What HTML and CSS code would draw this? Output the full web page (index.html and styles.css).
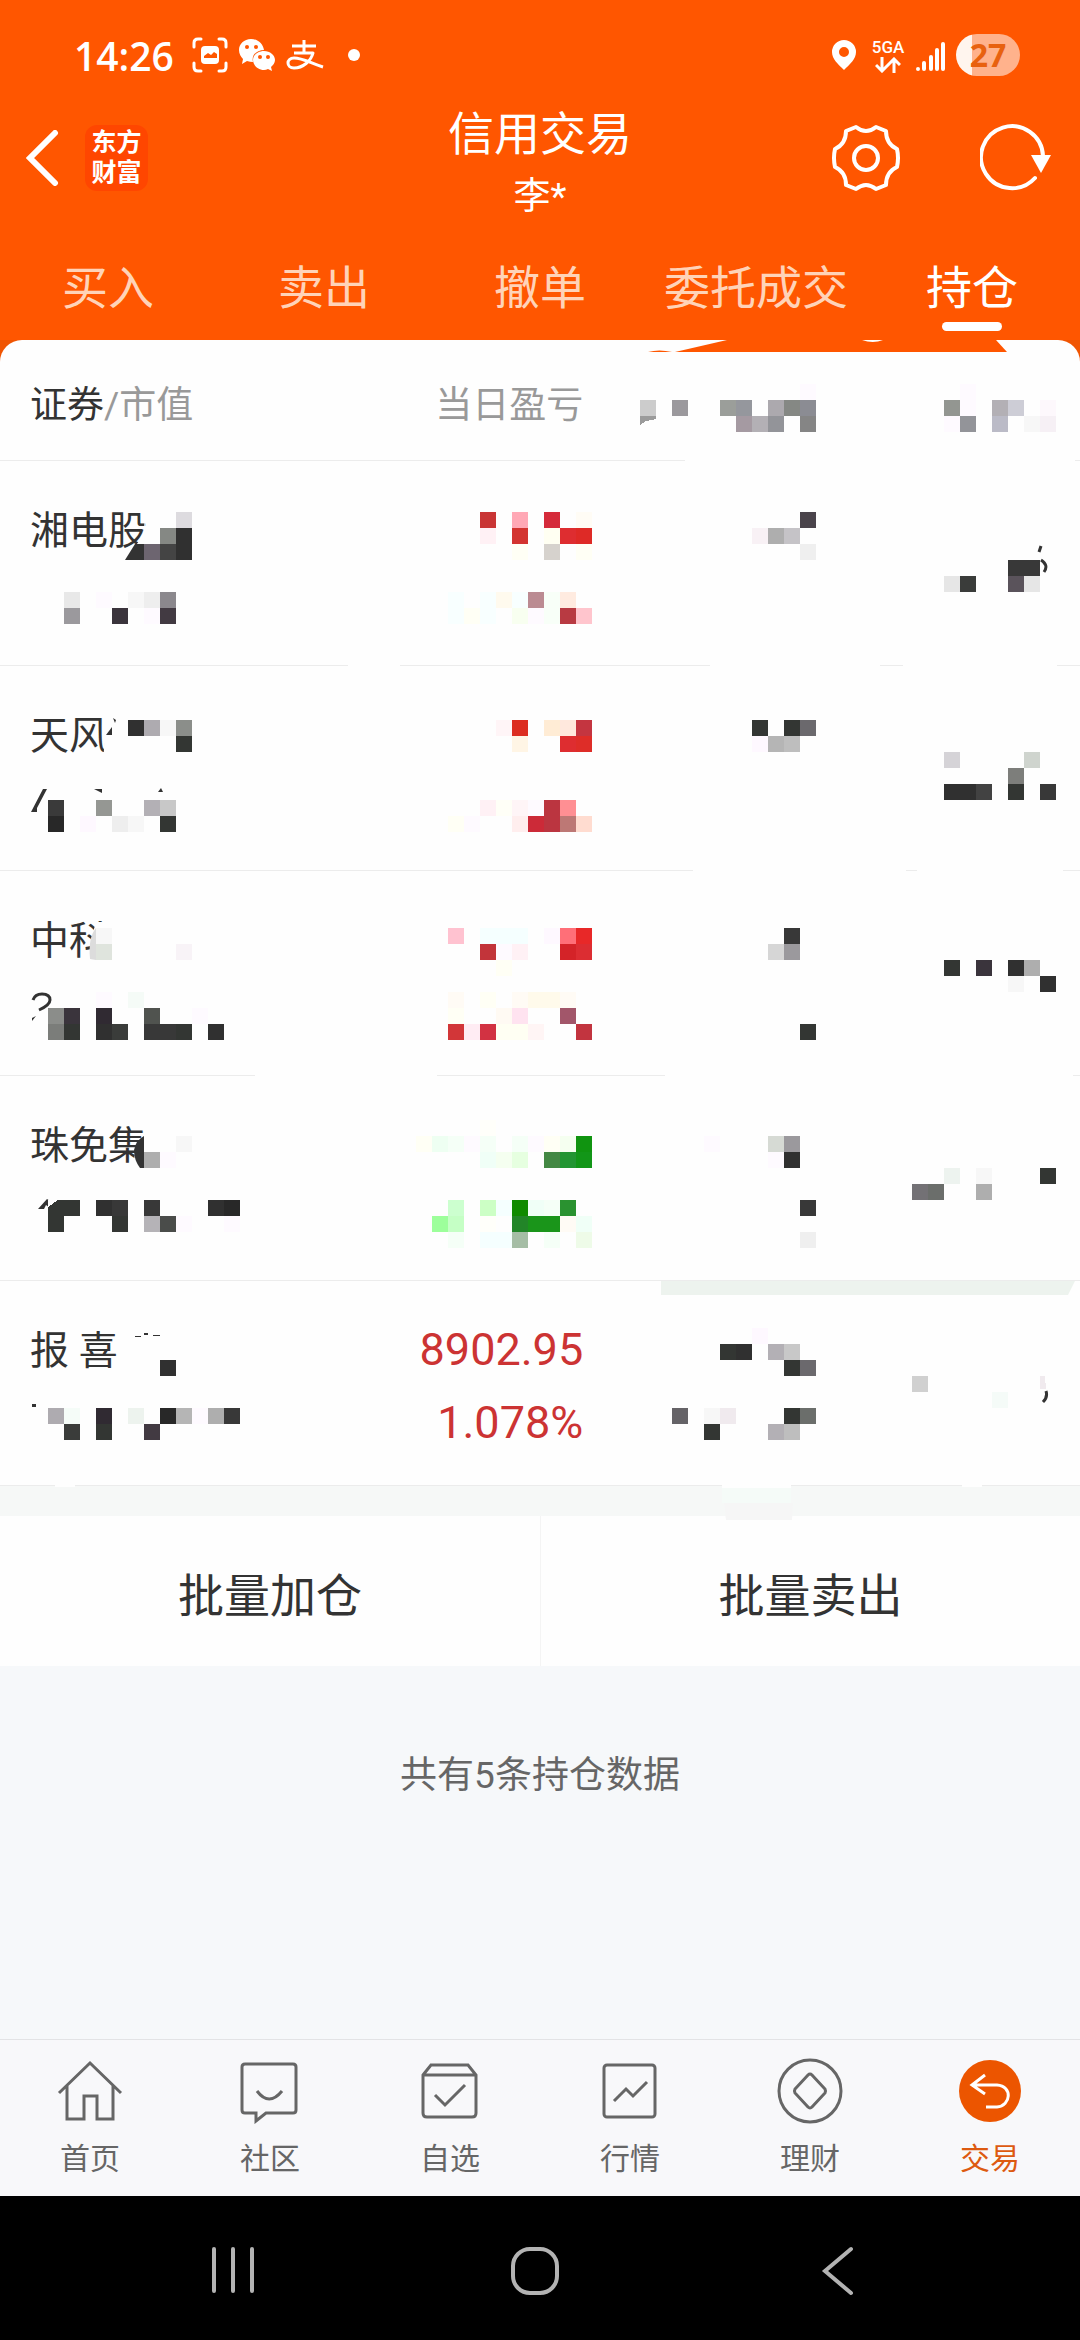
FILE: index.html
```html
<!DOCTYPE html>
<html lang="zh-CN">
<head>
    <meta charset="UTF-8">
    <meta name="viewport" content="width=device-width, initial-scale=1.0">
    <title>信用交易 - 持仓</title>
    <link rel="stylesheet" href="styles.css">
</head>
<body>
    <header class="header">
        <div class="status">
            <span class="time">14:26</span>
            <div class="status-icons">
                <svg width="36" height="36" viewBox="0 0 36 36">
                    <path d="M2 10V6q0-4 4-4h3M27 2h3q4 0 4 4v4M34 26v4q0 4-4 4h-3M9 34H6q-4 0-4-4v-4" fill="none" stroke="#fff" stroke-width="3" stroke-linecap="round"/>
                    <rect x="9" y="9" width="18" height="18" rx="4" fill="#fff"/>
                    <path d="M12 21v-2l4-3 3 2 3-3 3 2v4z" fill="#ff5600"/>
                </svg>
                <svg width="38" height="32" viewBox="0 0 38 32">
                    <path d="M13 0C6 0 1 5 1 11c0 4 2 7 4 9l-1 5 5-3q3 1 6 1C13 15 20 11 26 11 25 5 20 0 13 0z" fill="#fff"/>
                    <path d="M26 12c-6 0-11 4-11 9s5 10 11 10q2 0 4-1l4 2-1-4c2-2 4-4 4-7 0-5-5-9-11-9z" fill="#fff"/>
                    <circle cx="9" cy="8" r="2" fill="#ff5600"/>
                    <circle cx="18" cy="8" r="2" fill="#ff5600"/>
                    <circle cx="22" cy="18" r="2" fill="#ff5600"/>
                    <circle cx="30" cy="18" r="2" fill="#ff5600"/>
                </svg>
                <svg width="38" height="32" viewBox="0 0 38 32" fill="none" stroke="#fff" stroke-width="3">
                    <path d="M6 7h24M18 1v13M8 14h19C25 22 17 29 8 29 0 29 0 19 8 19c9 0 16 5 29 9" stroke-linejoin="round"/>
                </svg>
                <span class="dot"></span>
            </div>
            <div class="status-right">
                <svg class="pin" width="24" height="30" viewBox="0 0 24 30">
                    <path d="M12 0a12 12 0 0 0-12 12c0 7 6 12 12 18 6-6 12-11 12-18a12 12 0 0 0-12-12zm0 17a5 5 0 1 1 0-10 5 5 0 0 1 0 10z" fill="#fff" fill-rule="evenodd"/>
                </svg>
                <div class="net">
                    <span>5GA</span>
                    <svg width="26" height="16" viewBox="0 0 26 16" fill="none" stroke="#fff" stroke-width="3">
                        <path d="M7 0v14M1 8l6 6 6-6M19 16V2M13 8l6-6 6 6"/>
                    </svg>
                </div>
                <svg class="signal" width="30" height="30" viewBox="0 0 30 30" stroke="#fff" stroke-width="4" stroke-linecap="round">
                    <path d="M2 27v0M8 21v6M15 15v12M21 8v19M27 2v25"/>
                </svg>
                <span class="battery">27</span>
            </div>
        </div>

        <div class="nav">
            <div class="nav-left">
                <button class="icon-btn" aria-label="返回">
                    <svg width="33" height="56" viewBox="0 0 33 56">
                        <path d="M29 3L4 28l25 25" fill="none" stroke="#fff" stroke-width="6" stroke-linecap="round"/>
                    </svg>
                </button>
                <a href="#" class="logo">东方<br>财富</a>
            </div>
            <div class="nav-title">
                <h1>信用交易</h1>
                <p>李*</p>
            </div>
            <div class="nav-right">
                <button class="icon-btn" aria-label="设置">
                    <svg width="68" height="68" viewBox="-34 -34 68 68" fill="none" stroke="#fff" stroke-width="4" stroke-linejoin="round">
                        <path d="M-10-31Q0-23 10-31L20-27Q20-14 31-9Q33 0 31 9Q20 14 20 27L10 31Q0 23-10 31L-20 27Q-20 14-31 9Q-33 0-31-9Q-20-14-20-27Z"/>
                        <circle r="12"/>
                    </svg>
                </button>
                <button class="icon-btn" aria-label="刷新">
                    <svg width="72" height="68" viewBox="0 0 72 68">
                        <path d="M55 54A31 31 0 1 1 63 32" fill="none" stroke="#fff" stroke-width="4" stroke-linecap="round"/>
                        <path d="M51 31h20l-10 18z" fill="#fff"/>
                    </svg>
                </button>
            </div>
        </div>

        <nav class="tabs">
            <a href="#">买入</a>
            <a href="#">卖出</a>
            <a href="#">撤单</a>
            <a href="#">委托成交</a>
            <a href="#" class="active">持仓</a>
        </nav>
    </header>

    <main>
        <div class="holdings">
            <table>
                <thead>
                    <tr>
                        <th class="name">证券<span>/市值</span></th>
                        <th class="profit">当日盈亏</th>
                        <th></th>
                        <th></th>
                    </tr>
                </thead>
                <tbody>
                    <tr><td class="name">湘电股</td><td class="profit"></td><td></td><td></td></tr>
                    <tr><td class="name">天风</td><td class="profit"></td><td></td><td></td></tr>
                    <tr><td class="name">中科</td><td class="profit"></td><td></td><td></td></tr>
                    <tr><td class="name">珠免集</td><td class="profit"></td><td></td><td></td></tr>
                    <tr><td class="name">报 喜</td><td class="profit">8902.95<br>1.078%</td><td></td><td></td></tr>
                </tbody>
            </table>
            <!-- privacy mask: erased parts, scraps left over, then the mosaic on a 16px grid -->
            <svg class="mask" viewBox="0 340 1080 1180" aria-hidden="true">
                <g fill="#ff5600">
                    <path d="M675 352L727 340H996L1007 352z"/>
                    <path d="M648 352q11-3 24 0z"/>
                </g>
                <path d="M862 340h21q-10 4-21 0z" fill="#fefefe"/>
                <g fill="#fefefe">
                    <path d="M685 458h390v5H685zM348 663h52v5h-52zM710 663h170v5H710zM903 663h154v5H903z"/>
                    <path d="M693 868h213v5H693zM917 868h146v5H917zM255 1073h182v5H255zM665 1073h408v5H665z"/>
                    <path d="M145 505V560H124L144 535zM103 775l2-55h20v75h-20zM94 960q-6-22 3-38h30v50H94z"/>
                    <path d="M144 1120h10v50h-20q-2-20 10-34zM55 1484h20v3H55zM962 1484h20v3h-20z"/>
                </g>
                <path d="M661 1281h414l-7 14H661z" fill="#edf3ee"/>
                <path d="M722 1484h69v4h-69z" fill="#fefefe"/>
                <path d="M722 1488h69v15h-69z" fill="#f5fbf8"/>
                <path d="M724 1503h69l-1 17h-66z" fill="#f6f6f6"/>
                <g fill="#333">
                    <path d="M125 560l10-16h10v16z"/>
                    <path d="M106 735l6-8v8zM113 718l3 2-1 3z"/>
                    <path d="M31 812l12-23h4l-10 19v4zM94 789h8v4zM158 792l3-4 2 4z"/>
                    <path d="M32 1018l4-2-4 5z"/>
                    <path d="M134 1150q2-10 10-14v32h-4q-6-8-6-18z"/>
                    <path d="M38 1209l9-10 3 2v7l-4-3-2 4z"/>
                    <path d="M135 1336h6v1h-6zM144 1333h4v2h-4zM153 1335h7v1h-7zM32 1404h4v3h-4z"/>
                </g>
                <path d="M90 959q-2-22 6-31v32z" fill="#dcdcdc"/>
                <g fill="none" stroke="#333" stroke-width="3">
                    <path d="M33 1000q2-6 9-6 8 0 8 6 0 5-11 10"/>
                    <path d="M1041 546l-2 6M1041 560q8 5 3 12M1046 1391q2 6-3 11"/>
                </g>
                <g id="mosaic" shape-rendering="crispEdges"></g>
            </svg>
        </div>

        <div class="actions">
            <button>批量加仓</button>
            <button>批量卖出</button>
        </div>
        <p class="count">共有5条持仓数据</p>
    </main>

    <nav class="tabbar">
        <a href="#">
            <svg width="66" height="66" viewBox="0 0 66 66"><path d="M2 35L33 5l31 30M10 28v33h17V38h13v23h16V28"/></svg>
            首页
        </a>
        <a href="#">
            <svg width="66" height="66" viewBox="0 0 66 66"><path d="M8 6h48q3 0 3 3v43q0 3-3 3H29l-10 8v-8H8q-3 0-3-3V9q0-3 3-3zM20 33q12 16 25 0"/></svg>
            社区
        </a>
        <a href="#">
            <svg width="66" height="66" viewBox="0 0 66 66"><path d="M6 17l8-10h37l8 10v38q0 4-4 4H10q-4 0-4-4zM6 17h53M18 37l10 10 20-20"/></svg>
            自选
        </a>
        <a href="#">
            <svg width="66" height="66" viewBox="0 0 66 66"><rect x="7" y="7" width="51" height="52" rx="3"/><path d="M17 43l12-12 7 7 14-14"/></svg>
            行情
        </a>
        <a href="#">
            <svg width="66" height="66" viewBox="0 0 66 66"><circle cx="33" cy="33" r="31"/><path d="M31 17q2-2 4 0l13 14q1 2 0 4L35 49q-2 2-4 0L18 35q-1-2 0-4z"/></svg>
            理财
        </a>
        <a href="#" class="active">
            <svg width="66" height="66" viewBox="0 0 66 66"><circle cx="33" cy="33" r="31"/><path d="M28 17L15 27l13 9M16 27h24c16 1 14 21 0 22H29"/></svg>
            交易
        </a>
    </nav>

    <footer class="system-nav">
        <button class="icon-btn" aria-label="最近任务">
            <svg width="50" height="50" viewBox="0 0 50 50"><path d="M6 3v42M25 3v42M44 3v42"/></svg>
        </button>
        <button class="icon-btn" aria-label="主屏幕">
            <svg width="50" height="50" viewBox="0 0 50 50"><rect x="3" y="3" width="44" height="44" rx="17"/></svg>
        </button>
        <button class="icon-btn" aria-label="后退">
            <svg width="50" height="50" viewBox="0 0 50 50"><path d="M39 3L13 25l26 22"/></svg>
        </button>
    </footer>

    <script>
        // grid row -> "column:colour" for every block that is filled
        const blocks = {
            24: '50:fefaff 60:fefaff',
            25: '40:cccccc 42:9b999d 45:9b9e9a 46:95979d 48:aca9ae 49:858884 50:8b8c93 59:939691 60:fefaff 62:b3b0b5 63:cdcdd6 65:fdf8fc',
            26: '46:a59aa2 47:b3b0b5 48:939499 50:858585 59:fefaff 60:939499 62:bbbbc7 64:f7f7f7 65:f6f0f5',
            32: '11:dddbdf 30:c93535 32:ffa8b5 34:d52b3a 36:fffcf5 50:4a444b',
            33: '10:858884 11:303030 30:fff1f5 32:d33430 34:fffff2 35:de2d30 36:de2a26 47:f8f1f5 48:aeaeae 49:c5c3c7',
            34: '9:6d6570 10:444444 11:303030 32:fffff5 34:d6d2cd 36:fffff5 50:efefef',
            35: '63:383838 64:383838',
            36: '59:e6e6e6 60:3a3c3a 63:5a535b 64:e6e6e6',
            37: '4:e8e8e8 6:fefaff 8:f7f7f7 9:eeeeee 10:8b888d 28:f8ffff 30:f8ffff 31:fffaee 32:f8ffff 33:bb8b92 34:f8fff8 35:ffebe0',
            38: '4:9b999d 7:3a343c 9:fefaff 10:423a42 28:f8ffff 29:fffff5 30:f8ffff 32:f8fff0 33:fefaff 34:f8fff8 35:b83a42 36:ffc5cd',
            45: '8:303030 9:aeabb0 10:f7f7f7 11:8b8e8a 31:fff5f7 32:dc2d20 34:ffecd5 35:ffe8dd 36:c43540 47:333633 49:333633 50:6b696d',
            46: '11:333633 32:fff5e5 35:de2d30 36:de2d28 47:fef8ff 48:b5b5b5 49:bebebe',
            47: '59:d5d3d7 64:cfd4ce',
            48: '63:7d7e7b',
            49: '59:303030 60:303030 61:424242 63:333633 65:383838',
            50: '3:3a3a3a 6:959793 9:b3b0b5 10:c8c8c8 30:fff1f5 31:fffff7 32:fff5f7 33:fefaff 34:bb3540 35:ff8f93',
            51: '3:282828 5:fef8ff 7:eeeeee 8:f7f7f7 10:333633 28:fffff5 29:fefaff 32:ffeeee 33:cc2a38 34:bb3540 35:bd7875 36:ffdcd0',
            58: '6:f7f7f7 28:ffc2d0 30:f5ffff 31:f5ffff 32:f5ffff 34:fef8ff 35:ff6f78 36:e82828 49:383838',
            59: '6:dfe4dd 11:f8f3f7 30:c2343a 31:fefaff 32:fff1f5 35:d42328 36:dc2d32 48:d6d6d6 49:9b999d',
            60: '31:fffff5 59:333633 61:3a343c 63:303030 64:aeaeae',
            61: '63:f7f7f7 65:303030',
            62: '6:fefaff 8:f5fbf7 28:fffbf5 30:fffff5 32:fffbf5 33:fffaeb 34:fffaeb 35:fffbf5',
            63: '3:8b8d8a 4:3a343c 6:302a32 9:50534f 12:fefaff 28:fffff5 31:fffaf3 32:ffe3f0 35:a2566a',
            64: '3:7b7d7a 4:333633 6:303030 7:3a3c3a 9:383838 10:383838 11:333633 13:303030 28:d23638 29:ffecf3 30:d23242 31:fffff3 32:fffff3 33:fff5f5 36:c2343f 50:333633',
            70: '30:fffffa',
            71: '11:f7f7f7 26:fffff5 27:eefff2 28:f5fff7 29:fefaff 30:f5fff7 32:f5fff7 33:fefaff 34:fffff5 35:f5fff0 36:109410 44:fefaff 48:d6dad4 49:9b999d',
            72: '9:aeaeae 10:fefaff 30:f0fff7 31:f5fff0 32:e6ffe0 34:448844 35:229532 36:129618 48:fefaff 49:303030',
            73: '59:edf3ef 61:f7f7f7 65:333633',
            74: '57:737175 58:6b6e6b 61:aeaeae',
            75: '3:333633 4:333633 6:303030 7:383838 9:383838 13:303030 14:282828 28:ccffcf 30:ccffc5 31:f5ffff 32:108a00 33:f0fff7 34:f5fff7 35:2a9230 50:383838',
            76: '3:333633 7:333633 9:b5b3b7 10:4a4c4a 11:fefaff 14:fefaff 27:9dff9b 28:c5ffc5 30:fffffa 32:228528 33:1a951a 34:1a951a 35:fffbf5 36:f0fff7',
            77: '28:f5fff7 30:f5ffff 31:f5ffff 32:a5bda5 34:f5fff7 36:eefbe8 50:efefef',
            83: '47:fef8ff',
            84: '45:333633 46:303030 48:b3b0b5 49:c8c8c8',
            85: '10:303030 49:333633 50:6b696d',
            86: '57:d0d0d0',
            87: '62:f5fbf8',
            88: '3:aeabb0 4:f5fcf8 6:302a32 8:edf3ee 10:282828 11:b5b5b5 12:fefaff 13:aeaeae 14:383838 42:656367 44:f7f7f7 45:f0eaee 49:333633 50:6b6e6b',
            89: '4:3a3c3a 6:333633 9:423a42 44:333633 48:b3b0b5 49:bebebe'
        };

        const mosaic = document.getElementById('mosaic');
        for (const row in blocks) {
            blocks[row].split(' ').forEach(function(block) {
                const [col, color] = block.split(':');
                const rect = document.createElementNS('http://www.w3.org/2000/svg', 'rect');
                rect.setAttribute('x', col * 16);
                rect.setAttribute('y', row * 16);
                rect.setAttribute('width', 16);
                rect.setAttribute('height', 16);
                rect.setAttribute('fill', '#' + color);
                mosaic.appendChild(rect);
            });
        }

        // blocks the eraser cut through
        mosaic.insertAdjacentHTML('beforeend',
            '<path d="M640 416h16v3l-10 2-6 4z" fill="#9b9b9b"/>' +
            '<path d="M1040 1376h5l1 13h-6z" fill="#f0eaee"/>' +
            '<path d="M48 1200h10l-10 7z" fill="#fefefe"/>');
    </script>
</body>
</html>
```
FILE: styles.css
```css
* {
    box-sizing: border-box;
}
body {
    margin: 0;
    min-height: 100vh;
    display: flex;
    flex-direction: column;
    background: #f6f8fa;
    color: #333;
    font-family: Roboto, "Noto Sans CJK SC", sans-serif;
}
main {
    flex: 1;
}
a {
    color: inherit;
    text-decoration: none;
}
button {
    border: none;
    padding: 0;
    background: none;
    color: inherit;
    font-family: inherit;
}
svg {
    display: block;
}
.icon-btn {
    display: flex;
}

/* Orange header */
.header {
    background: #ff5600;
    color: #fff;
}
.status {
    display: flex;
    align-items: center;
    height: 104px;
    padding: 6px 60px 0 74px;
}
.time {
    font: 600 39px "Open Sans", sans-serif;
    margin-right: 18px;
}
.status-icons {
    display: flex;
    align-items: center;
    gap: 10px;
}
.dot {
    width: 12px;
    height: 12px;
    margin-left: 14px;
    border-radius: 50%;
    background: #fff;
}
.status-right {
    display: flex;
    align-items: center;
    margin-left: auto;
}
.net {
    display: flex;
    flex-direction: column;
    align-items: center;
    width: 32px;
    margin: 0 12px 0 16px;
    font: 500 17px/20px Roboto, sans-serif;
}
.signal {
    margin-top: 3px;
}
.battery {
    width: 64px;
    margin-left: 10px;
    border-radius: 21px;
    background: linear-gradient(to right, #fff5ee 16px, #ffb28c 16px);
    color: #e8610f;
    font: 700 32px/42px "Open Sans", sans-serif;
    text-align: center;
}
.nav {
    display: grid;
    grid-template-columns: 1fr auto 1fr;
    align-items: start;
}
.nav-left, .nav-right {
    display: flex;
    align-items: center;
    height: 108px;
}
.nav-left {
    gap: 26px;
    padding-left: 26px;
}
.nav-right {
    justify-content: flex-end;
    gap: 80px;
    padding-right: 28px;
}
.logo {
    width: 63px;
    padding: 3px 0;
    border-radius: 12px;
    background: #ff4600;
    font-size: 25px;
    font-weight: 700;
    line-height: 30px;
    text-align: center;
}
.nav-title {
    text-align: center;
}
.nav-title h1 {
    margin: 0;
    font-size: 46px;
    font-weight: 400;
    line-height: 60px;
}
.nav-title p {
    margin: 0;
    padding-top: 2px;
    font-size: 37px;
    line-height: 62px;
}
.tabs {
    display: grid;
    grid-template-columns: repeat(5, 1fr);
    height: 112px;
    padding-top: 30px;
    font-size: 46px;
    line-height: 60px;
    text-align: center;
}
.tabs a {
    position: relative;
    color: #ffd3b8;
}
.tabs a.active {
    color: #fff;
}
.tabs a.active::after {
    content: "";
    position: absolute;
    left: 50%;
    bottom: 9px;
    width: 60px;
    height: 9px;
    margin-left: -30px;
    border-radius: 5px;
    background: #fff;
}

/* Holdings table */
.holdings {
    position: relative;
    background: linear-gradient(#f05502 40px, #f6f8f7 40px);
    padding-bottom: 30px;
}
table {
    width: 100%;
    table-layout: fixed;
    border-spacing: 0;
    border-radius: 22px 22px 0 0;
    background: #fefefe;
}
th {
    height: 121px;
    padding: 4px 0 0;
    border-bottom: 1px solid #ececec;
    font-size: 37px;
    font-weight: 400;
    text-align: left;
}
td {
    height: 205px;
    padding: 32px 0 26px;
    border-bottom: 1px solid #ececec;
    font-size: 39px;
    line-height: 73px;
    vertical-align: top;
}
th.name, td.name {
    width: 30%;
    padding-left: 30px;
}
td.name {
    padding-top: 34px;
}
th.name span, th.profit {
    color: #999;
}
th.profit, td.profit {
    width: 24%;
    text-align: right;
}
td.profit {
    color: #cc3333;
    font-size: 45px;
}
.mask {
    position: absolute;
    top: 0;
    left: 0;
    width: 100%;
    z-index: 1;
}

.actions {
    display: grid;
    grid-template-columns: 1fr 1fr;
    background: #fefefe;
}
.actions button {
    height: 150px;
    padding-top: 2px;
    font-size: 46px;
}
.actions button + button {
    border-left: 1px solid #f4f4f4;
}
.count {
    margin: 0;
    padding-top: 80px;
    color: #666;
    font-size: 37px;
    line-height: 60px;
    text-align: center;
}

/* Bottom bars */
.tabbar {
    display: grid;
    grid-template-columns: repeat(6, 1fr);
    padding: 18px 0 15px;
    border-top: 1px solid #e2e3e5;
    background: #f8f8fa;
    color: #666;
    font-size: 30px;
}
.tabbar a {
    display: flex;
    flex-direction: column;
    align-items: center;
    gap: 13px;
    line-height: 44px;
}
.tabbar svg {
    fill: none;
    stroke: #666;
    stroke-width: 3px;
}
.tabbar .active {
    color: #dd5a10;
}
.tabbar .active svg {
    stroke: #fff;
}
.tabbar .active circle {
    fill: #ec5500;
    stroke: none;
}
.system-nav {
    display: grid;
    grid-template-columns: repeat(3, 1fr);
    justify-items: center;
    align-items: center;
    height: 144px;
    padding: 5px 92px 0 82px;
    background: #000;
}
.system-nav svg {
    fill: none;
    stroke: #b3b3b3;
    stroke-width: 4px;
    stroke-linecap: round;
}
```
